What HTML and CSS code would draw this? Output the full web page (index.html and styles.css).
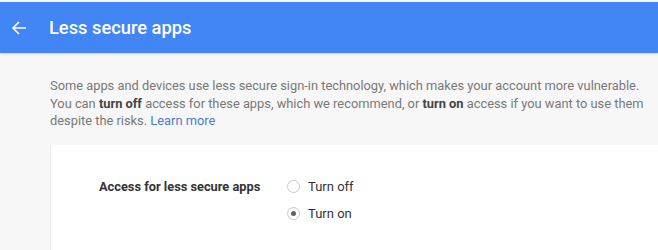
FILE: index.html
```html
<!DOCTYPE html>
<html lang="en">
<head>
    <meta charset="UTF-8">
    <meta name="viewport" content="width=device-width, initial-scale=1.0">
    <title>Less secure apps</title>
    <link rel="stylesheet" href="styles.css">
</head>
<body>
    <div class="appbar">
        <a class="back" href="#">
            <svg width="16" height="16" viewBox="0 0 16 16">
                <path d="M15 8H2M8 2L2 8l6 6" fill="none" stroke="#fff" stroke-width="1.6"/>
            </svg>
        </a>
        <h1>Less secure apps</h1>
    </div>
    <div class="content">
        <p class="intro">
            Some apps and devices use less secure sign-in technology, which makes your account more vulnerable.<br>
            You can <b>turn off</b> access for these apps, which we recommend, or <b>turn on</b> access if you want to use them<br>
            despite the risks. <a href="#">Learn more</a>
        </p>
        <div class="card">
            <div class="setting">
                <div class="setting-label">Access for less secure apps</div>
                <div class="options">
                    <label class="option"><span class="radio"></span>Turn off</label>
                    <label class="option"><span class="radio checked"></span>Turn on</label>
                </div>
            </div>
        </div>
    </div>
</body>
</html>
```

FILE: styles.css
```css
body {
    font-family: Roboto, 'Noto Sans', sans-serif;
    background-color: #f7f7f7;
    margin: 0;
    padding: 2px 0 0 0;
    overflow: hidden;
}
.appbar {
    background-color: #4285f4;
    height: 51px;
    display: flex;
    align-items: center;
    padding-left: 11px;
    box-shadow: 0 1px 2px rgba(0, 0, 0, 0.15);
}
.back {
    display: flex;
    width: 16px;
    height: 16px;
    margin-right: 22px;
}
.appbar h1 {
    margin: 0;
    color: white;
    font-size: 18.3px;
    font-weight: 500;
}
.content {
    padding: 24px 0 0 50px;
}
.intro {
    margin: 0;
    font-size: 12.85px;
    line-height: 17.5px;
    color: #777;
    white-space: nowrap;
}
.intro b {
    color: #444;
    font-weight: 700;
}
.intro a {
    color: #4a7bd0;
    text-decoration: none;
}
.card {
    background-color: white;
    margin-top: 15px;
    border-left: 1px solid #ececec;
    padding: 33px 0 30px 48px;
}
.setting {
    display: flex;
}
.setting-label {
    width: 188px;
    font-size: 12.8px;
    font-weight: 700;
    color: #333;
    line-height: 18px;
}
.options {
    display: flex;
    flex-direction: column;
    gap: 9px;
}
.option {
    display: flex;
    align-items: center;
    font-size: 13px;
    color: #333;
    line-height: 18px;
}
.radio {
    width: 11px;
    height: 11px;
    border: 1px solid #c8c8c8;
    border-radius: 50%;
    margin-right: 8px;
    display: flex;
    align-items: center;
    justify-content: center;
}
.radio.checked::after {
    content: "";
    width: 5px;
    height: 5px;
    border-radius: 50%;
    background-color: #616161;
}
```
